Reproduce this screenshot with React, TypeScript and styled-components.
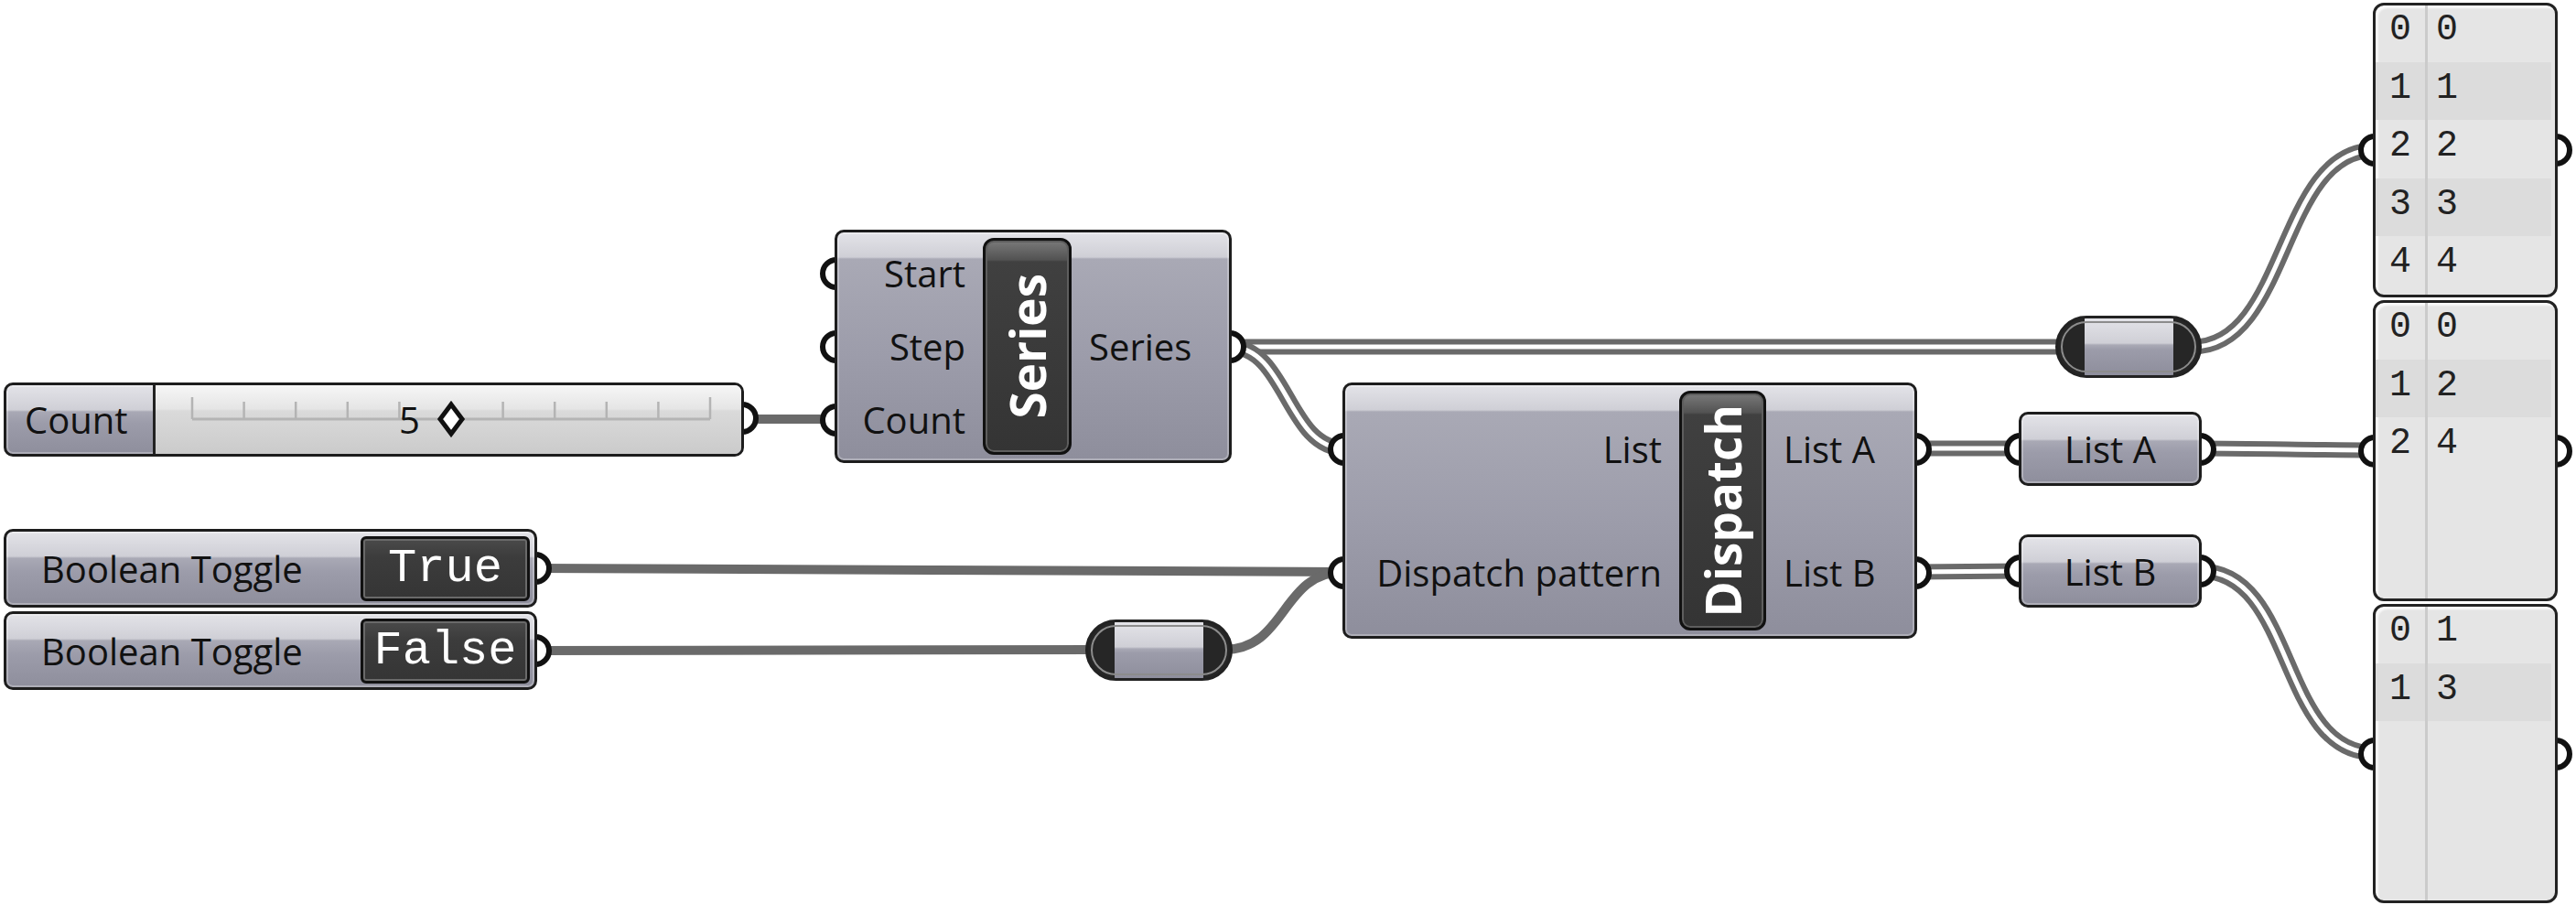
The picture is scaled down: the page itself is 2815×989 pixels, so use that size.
import React from 'react';
import styled, { createGlobalStyle } from 'styled-components';

const GlobalStyle = createGlobalStyle`
    html, body {
        margin: 0;
        padding: 0;
        background: #fff;
    }
    body {
        font-family: "Open Sans", "Noto Sans", sans-serif;
        color: #111;
    }
`;

const BODY_BG =
    'linear-gradient(to bottom, #e3e3e8 0px, #cfcfd6 27px, #a9a9b5 29px, #9c9caa 55%, #8e8e9c 100%)';
const TAG_BG = 'linear-gradient(to bottom, #7a7a7a 0px, #525252 21px, #404040 23px, #343434 100%)';

const Canvas = styled.div`
    position: relative;
    width: 2815px;
    height: 989px;
    overflow: hidden;
    background: #fff;
`;

const WireLayer = styled.svg`
    position: absolute;
    left: 0;
    top: 0;
    z-index: 0;
`;

const Frame = styled.div<{ $x: number; $y: number; $w: number; $h: number }>`
    position: absolute;
    left: ${p => p.$x}px;
    top: ${p => p.$y}px;
    width: ${p => p.$w}px;
    height: ${p => p.$h}px;
    z-index: 1;
`;

const Port = styled.span<{ $side: 'left' | 'right'; $y: number }>`
    position: absolute;
    top: ${p => p.$y - 18}px;
    ${p => (p.$side === 'left' ? 'left: -16px;' : 'right: -16px;')}
    width: 24px;
    height: 24px;
    border: 6px solid #111;
    border-radius: 50%;
    background: #fff;
    z-index: 0;
`;

const Body = styled.div`
    position: relative;
    z-index: 1;
    box-sizing: border-box;
    width: 100%;
    height: 100%;
    border: 3px solid #1d1d1d;
    border-radius: 10px;
    background: ${BODY_BG};
    box-shadow: inset 0 0 0 2px rgba(255, 255, 255, 0.28);
    overflow: hidden;
`;

/* ---------- component (Series / Dispatch) ---------- */

const ComponentBody = styled(Body)<{ $in: number; $tag: number }>`
    display: grid;
    grid-template-columns: ${p => p.$in}px ${p => p.$tag}px 1fr;
`;

const Col = styled.div`
    display: flex;
    flex-direction: column;
    justify-content: center;
`;

const PortLabel = styled.div<{ $h: number; $align: 'start' | 'end' }>`
    height: ${p => p.$h}px;
    display: flex;
    align-items: center;
    justify-content: ${p => (p.$align === 'end' ? 'flex-end' : 'flex-start')};
    padding: 0 19px;
    font-size: 40px;
    line-height: 1;
    white-space: nowrap;
`;

const Tag = styled.div`
    margin: 6px 0;
    box-sizing: border-box;
    border: 3px solid #111;
    border-radius: 12px;
    background: ${TAG_BG};
    box-shadow: inset 0 0 0 2px #5e5e5e;
    display: flex;
    align-items: center;
    justify-content: center;
`;

const TagText = styled.span`
    writing-mode: vertical-rl;
    transform: rotate(180deg);
    font-weight: 700;
    font-size: 53px;
    line-height: 1;
    color: #fff;
`;

/* ---------- slider ---------- */

const SliderBody = styled(Body)`
    display: flex;
`;

const SliderName = styled.div`
    width: 163px;
    box-sizing: border-box;
    border-right: 3px solid #222;
    display: flex;
    align-items: center;
    padding-left: 20px;
    font-size: 40px;
`;

const SliderTrack = styled.div`
    position: relative;
    flex: 1;
    display: flex;
    align-items: center;
    background: linear-gradient(to bottom, #f6f6f6 0px, #e5e5e5 26px, #dadada 28px, #cbcbcb 100%);
`;

const TrackDrawing = styled.svg`
    position: absolute;
    left: 0;
    top: 0;
`;

const SliderValue = styled.span`
    position: relative;
    margin-left: 266px;
    font-size: 40px;
    line-height: 1;
`;

/* ---------- toggle ---------- */

const ToggleBody = styled(Body)`
    display: flex;
    align-items: center;
    justify-content: space-between;
    padding: 0 5px 0 38px;
    font-size: 40px;
`;

const ToggleValue = styled.div`
    width: 185px;
    height: 71px;
    box-sizing: border-box;
    border: 3px solid #111;
    border-radius: 6px;
    background: linear-gradient(to bottom, #4a4a4a 0px, #3c3c3c 20px, #353535 100%);
    box-shadow: inset 0 0 0 2px #6a6a6a;
    display: flex;
    align-items: center;
    justify-content: center;
    font-family: "Liberation Mono", monospace;
    font-size: 52px;
    color: #fff;
`;

/* ---------- param ---------- */

const ParamBody = styled(Body)`
    display: flex;
    align-items: center;
    justify-content: center;
    font-size: 40px;
`;

/* ---------- relay ---------- */

const Pill = styled.div`
    position: relative;
    z-index: 1;
    box-sizing: border-box;
    width: 100%;
    height: 100%;
    border: 3px solid #222;
    border-radius: 999px;
    background: #262626;
    display: flex;
    justify-content: center;
    overflow: hidden;

    &::after {
        content: '';
        position: absolute;
        inset: 3px;
        border: 2px solid #8c8c8c;
        border-radius: 999px;
    }
`;

const PillCore = styled.div`
    width: 97px;
    height: 100%;
    background: ${BODY_BG};
`;

/* ---------- panel ---------- */

const PanelBody = styled(Body)`
    border-color: #222;
    border-radius: 12px;
    background: #e5e5e5;
    box-shadow: inset 3px 3px 2px rgba(255, 255, 255, 0.8);

    &::after {
        content: '';
        position: absolute;
        top: 0;
        bottom: 0;
        left: 54px;
        width: 3px;
        background: #cbcbcb;
    }
`;

const PanelRows = styled.div`
    margin-top: -2px;
`;

const PanelRow = styled.div<{ $alt: boolean }>`
    display: grid;
    grid-template-columns: 54px 1fr;
    align-items: center;
    height: 63.5px;
    margin-right: 4px;
    background: ${p => (p.$alt ? '#dcdcdc' : 'transparent')};
    font-family: "Liberation Mono", monospace;
    font-size: 40px;
    color: #222;
`;

const PanelIndex = styled.span`
    text-align: center;
    padding-bottom: 6px;
`;

const PanelValue = styled.span`
    padding-left: 12px;
    padding-bottom: 6px;
`;

/* ---------- pieces ---------- */

type Rect = { x: number; y: number; w: number; h: number };

const ComponentNode: React.FC<
    Rect & { name: string; inputs: string[]; outputs: string[]; inW: number; tagW: number; rowH: number }
> = ({ x, y, w, h, name, inputs, outputs, inW, tagW, rowH }) => {
    const first = h / 2 - ((inputs.length - 1) * rowH) / 2;
    const firstOut = h / 2 - ((outputs.length - 1) * rowH) / 2;
    return (
        <Frame $x={x} $y={y} $w={w} $h={h}>
            {inputs.map((n, i) => (
                <Port key={n} $side="left" $y={first + i * rowH} />
            ))}
            {outputs.map((n, i) => (
                <Port key={n} $side="right" $y={firstOut + i * rowH} />
            ))}
            <ComponentBody $in={inW} $tag={tagW}>
                <Col>
                    {inputs.map(n => (
                        <PortLabel key={n} $h={rowH} $align="end">
                            {n}
                        </PortLabel>
                    ))}
                </Col>
                <Tag>
                    <TagText>{name}</TagText>
                </Tag>
                <Col>
                    {outputs.map(n => (
                        <PortLabel key={n} $h={rowH} $align="start">
                            {n}
                        </PortLabel>
                    ))}
                </Col>
            </ComponentBody>
        </Frame>
    );
};

const Toggle: React.FC<Rect & { value: string }> = ({ x, y, w, h, value }) => (
    <Frame $x={x} $y={y} $w={w} $h={h}>
        <Port $side="right" $y={h / 2} />
        <ToggleBody>
            <span>Boolean Toggle</span>
            <ToggleValue>{value}</ToggleValue>
        </ToggleBody>
    </Frame>
);

const Param: React.FC<Rect & { label: string }> = ({ x, y, w, h, label }) => (
    <Frame $x={x} $y={y} $w={w} $h={h}>
        <Port $side="left" $y={h / 2} />
        <Port $side="right" $y={h / 2} />
        <ParamBody>{label}</ParamBody>
    </Frame>
);

const Relay: React.FC<Rect> = ({ x, y, w, h }) => (
    <Frame $x={x} $y={y} $w={w} $h={h}>
        <Pill>
            <PillCore />
        </Pill>
    </Frame>
);

const Panel: React.FC<Rect & { rows: [number, number][] }> = ({ x, y, w, h, rows }) => (
    <Frame $x={x} $y={y} $w={w} $h={h}>
        <Port $side="left" $y={h / 2} />
        <Port $side="right" $y={h / 2} />
        <PanelBody>
            <PanelRows>
                {rows.map(([i, v]) => (
                    <PanelRow key={i} $alt={i % 2 === 1}>
                        <PanelIndex>{i}</PanelIndex>
                        <PanelValue>{v}</PanelValue>
                    </PanelRow>
                ))}
            </PanelRows>
        </PanelBody>
    </Frame>
);

const Slider: React.FC<Rect & { label: string; value: number }> = ({ x, y, w, h, label, value }) => {
    const ticks = Array.from({ length: 11 }, (_, i) => 40 + i * 56.6);
    const grip = 40 + 0.5 * 566;
    return (
        <Frame $x={x} $y={y} $w={w} $h={h}>
            <Port $side="right" $y={h / 2 - 2} />
            <SliderBody>
                <SliderName>{label}</SliderName>
                <SliderTrack>
                    <TrackDrawing width={640} height={75}>
                        <line x1={40} y1={37} x2={606} y2={37} stroke="#b4b4b4" strokeWidth={3} />
                        {ticks.map((t, i) => (
                            <line
                                key={i}
                                x1={t}
                                x2={t}
                                y1={i === 0 || i === 10 ? 13 : 18}
                                y2={37}
                                stroke="#b4b4b4"
                                strokeWidth={2.5}
                            />
                        ))}
                        <polygon
                            points={`${grip},${21} ${grip + 12},${37} ${grip},${53} ${grip - 12},${37}`}
                            fill="#fff"
                            stroke="#111"
                            strokeWidth={5}
                            strokeLinejoin="miter"
                        />
                    </TrackDrawing>
                    <SliderValue>{value}</SliderValue>
                </SliderTrack>
            </SliderBody>
        </Frame>
    );
};

/* ---------- wires ---------- */

const curve = (x0: number, y0: number, x1: number, y1: number, k: number) =>
    `M${x0} ${y0} C${x0 + k} ${y0} ${x1 - k} ${y1} ${x1} ${y1}`;

const listWires = [
    curve(1344, 379, 2256, 379, 0),
    curve(1344, 379, 1469, 490, 62),
    curve(2396, 379, 2595, 164, 105),
    curve(2093, 490, 2208, 490, 0),
    curve(2404, 490, 2595, 492, 60),
    curve(2093, 625, 2208, 624, 30),
    curve(2404, 624, 2595, 823, 105),
];

const itemWires = [
    curve(811, 458, 914, 458, 0),
    curve(585, 621, 1469, 625, 200),
    curve(585, 711, 1196, 710, 0),
    curve(1337, 710, 1469, 625, 70),
];

const Wires: React.FC = () => (
    <WireLayer width={2815} height={989}>
        {itemWires.map((d, i) => (
            <path key={`i${i}`} d={d} fill="none" stroke="#6a6a6a" strokeWidth={10} />
        ))}
        {listWires.map((d, i) => (
            <g key={`l${i}`}>
                <path d={d} fill="none" stroke="#6a6a6a" strokeWidth={17} />
                <path d={d} fill="none" stroke="#fff" strokeWidth={5} />
            </g>
        ))}
    </WireLayer>
);

export default function App() {
    return (
        <>
            <GlobalStyle />
            <Canvas>
                <Wires />
                <Slider x={4} y={418} w={809} h={81} label="Count" value={5} />
                <ComponentNode
                    x={912}
                    y={251}
                    w={434}
                    h={255}
                    name="Series"
                    inputs={['Start', 'Step', 'Count']}
                    outputs={['Series']}
                    inW={159}
                    tagW={97}
                    rowH={80}
                />
                <ComponentNode
                    x={1467}
                    y={418}
                    w={628}
                    h={280}
                    name="Dispatch"
                    inputs={['List', 'Dispatch pattern']}
                    outputs={['List A', 'List B']}
                    inW={365}
                    tagW={95}
                    rowH={135}
                />
                <Toggle x={4} y={578} w={583} h={86} value="True" />
                <Toggle x={4} y={668} w={583} h={86} value="False" />
                <Relay x={1186} y={677} w={161} h={67} />
                <Relay x={2246} y={345} w={160} h={68} />
                <Param x={2206} y={450} w={200} h={81} label="List A" />
                <Param x={2206} y={584} w={200} h={80} label="List B" />
                <Panel
                    x={2593}
                    y={3}
                    w={202}
                    h={322}
                    rows={[
                        [0, 0],
                        [1, 1],
                        [2, 2],
                        [3, 3],
                        [4, 4],
                    ]}
                />
                <Panel
                    x={2593}
                    y={328}
                    w={202}
                    h={329}
                    rows={[
                        [0, 0],
                        [1, 2],
                        [2, 4],
                    ]}
                />
                <Panel
                    x={2593}
                    y={660}
                    w={202}
                    h={327}
                    rows={[
                        [0, 1],
                        [1, 3],
                    ]}
                />
            </Canvas>
        </>
    );
}
